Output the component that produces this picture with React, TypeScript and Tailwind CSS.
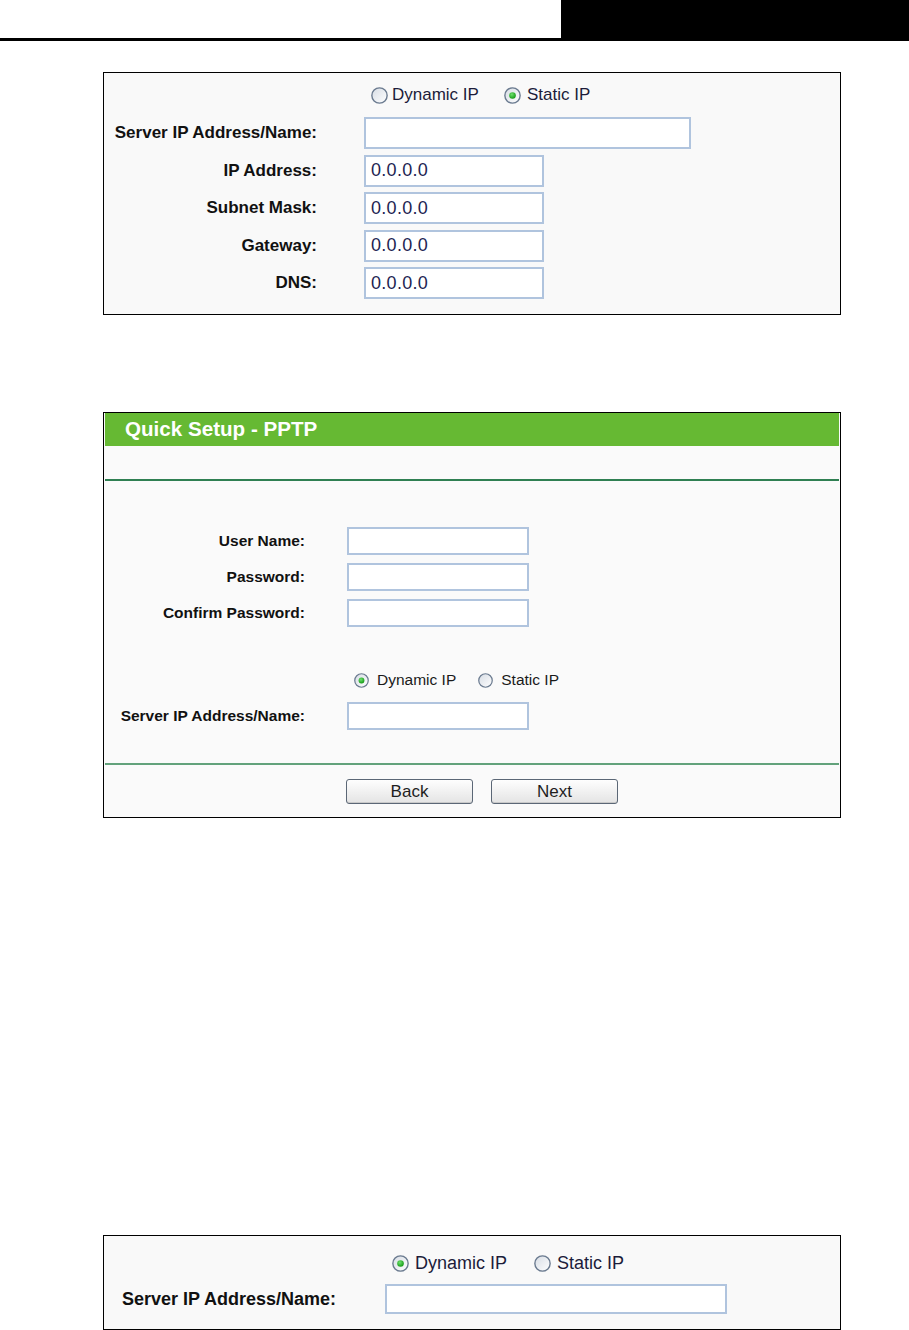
import React from 'react';

const font = { fontFamily: '"Liberation Sans", Arial, sans-serif' };

interface RadioProps {
    checked?: boolean;
    size: number;
    label: string;
    gap: number;
}

const Radio: React.FC<RadioProps> = ({ checked, size, label, gap }) => (
    <span className="flex items-center">
        <svg width={size} height={size} viewBox="0 0 16 16" className="shrink-0">
            <defs>
                <linearGradient id="radioFill" x1="0" y1="0" x2="1" y2="1">
                    <stop offset="0" stopColor="#d6dce4" />
                    <stop offset="1" stopColor="#ffffff" />
                </linearGradient>
                <radialGradient id="radioDot" cx="0.4" cy="0.35" r="0.7">
                    <stop offset="0" stopColor="#6ee06e" />
                    <stop offset="1" stopColor="#0f960f" />
                </radialGradient>
            </defs>
            <circle cx="8" cy="8" r="7.2" fill="url(#radioFill)" stroke="#6a7a8f" strokeWidth="1.3" />
            {checked && <circle cx="8" cy="8" r="3.1" fill="url(#radioDot)" />}
        </svg>
        <span style={{ marginLeft: gap }}>{label}</span>
    </span>
);

const Field: React.FC<{ value?: string; className: string }> = ({ value, className }) => (
    <div className={`bg-white border-2 border-[#b0c4de] flex items-center ${className}`}>
        {value && <span className="pl-[5px] text-[18px] tracking-[0.3px] text-[#231f52]">{value}</span>}
    </div>
);

const Button: React.FC<{ label: string }> = ({ label }) => (
    <div className="w-[127px] h-[25px] rounded-[3px] border border-[#5b6776] bg-gradient-to-b from-[#fefefe] to-[#e4e4e4] flex items-center justify-center text-[17px] text-[#1e1e1e] shadow-[inset_0_-1px_0_#c9c9c9]">
        {label}
    </div>
);

const StaticBox: React.FC = () => {
    const rows = ['IP Address:', 'Subnet Mask:', 'Gateway:', 'DNS:'];
    return (
        <div className="ml-[103px] mt-[31px] w-[738px] h-[243px] border border-black bg-[#f9f9f9] pt-[11px]">
            <div className="h-[22px] flex items-center pl-[267px] text-[17px] text-[#1c1c3a]">
                <Radio size={17} gap={4} label="Dynamic IP" />
                <span className="w-[25px]" />
                <Radio checked size={17} gap={6} label="Static IP" />
            </div>
            <div className="mt-[11px] flex flex-col gap-[5.5px]">
                <div className="flex items-center">
                    <div className="w-[213px] text-right font-bold text-[17px] text-[#111]">Server IP Address/Name:</div>
                    <Field className="ml-[47px] w-[327px] h-[32px]" />
                </div>
                {rows.map((r) => (
                    <div key={r} className="flex items-center">
                        <div className="w-[213px] text-right font-bold text-[17px] text-[#111]">{r}</div>
                        <Field value="0.0.0.0" className="ml-[47px] w-[180px] h-[32px]" />
                    </div>
                ))}
            </div>
        </div>
    );
};

const PptpBox: React.FC = () => {
    const rows = ['User Name:', 'Password:', 'Confirm Password:'];
    return (
        <div className="ml-[103px] mt-[97px] w-[738px] h-[406px] border border-black bg-[#fafafa] px-[1px] flex flex-col">
            <div className="h-[33px] bg-[#66b933] flex items-center pl-[20px] text-white font-bold text-[20.6px]">
                Quick Setup - PPTP
            </div>
            <div className="h-[33px]" />
            <div className="h-[2px] bg-[#2f7f52]" />
            <div className="mt-[46px] flex flex-col gap-[8px]">
                {rows.map((r) => (
                    <div key={r} className="flex items-center">
                        <div className="w-[200px] text-right font-bold text-[15.5px] text-[#111]">{r}</div>
                        <Field className="ml-[42px] w-[182px] h-[28px]" />
                    </div>
                ))}
            </div>
            <div className="mt-[42px] h-[22px] flex items-center pl-[249px] text-[15.5px] text-[#1a1a1a]">
                <Radio checked size={15} gap={8} label="Dynamic IP" />
                <span className="w-[22px]" />
                <Radio size={15} gap={8} label="Static IP" />
            </div>
            <div className="mt-[11px] flex items-center">
                <div className="w-[200px] text-right font-bold text-[15.5px] text-[#111]">Server IP Address/Name:</div>
                <Field className="ml-[42px] w-[182px] h-[28px]" />
            </div>
            <div className="mt-[33px] h-[2px] bg-[#62a27b]" />
            <div className="mt-[14px] flex pl-[241px] gap-[18px]">
                <Button label="Back" />
                <Button label="Next" />
            </div>
        </div>
    );
};

const DynamicBox: React.FC = () => (
    <div className="ml-[103px] mt-[417px] w-[738px] h-[95px] border border-black bg-[#f9f9f9] pt-[16px]">
        <div className="h-[22px] flex items-center pl-[288px] text-[18px] text-[#1c1c3a]">
            <Radio checked size={17} gap={6} label="Dynamic IP" />
            <span className="w-[27px]" />
            <Radio size={17} gap={6} label="Static IP" />
        </div>
        <div className="mt-[10px] flex items-center">
            <div className="w-[232px] text-right font-bold text-[18px] text-[#111]">Server IP Address/Name:</div>
            <Field className="ml-[49px] w-[342px] h-[30px]" />
        </div>
    </div>
);

const App: React.FC = () => {
    return (
        <div className="w-[909px] h-[1330px] bg-white overflow-hidden" style={font}>
            <div className="h-[38px] flex">
                <div className="ml-auto w-[348px] h-full bg-black" />
            </div>
            <div className="h-[3px] bg-black" />
            <StaticBox />
            <PptpBox />
            <DynamicBox />
        </div>
    );
};

export default App;
